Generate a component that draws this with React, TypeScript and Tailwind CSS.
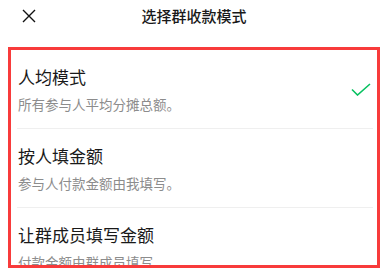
import { useState } from "react";

type Mode = {
  id: string;
  title: string;
  desc: string;
};

const modes: Mode[] = [
  { id: "avg", title: "人均模式", desc: "所有参与人平均分摊总额。" },
  { id: "self", title: "按人填金额", desc: "参与人付款金额由我填写。" },
  { id: "member", title: "让群成员填写金额", desc: "付款金额由群成员填写。" },
];

const CloseIcon = () => (
  <svg width="14" height="14" viewBox="0 0 14 14" fill="none">
    <path d="M1 1L13 13M13 1L1 13" stroke="#111" strokeWidth="1.4" />
  </svg>
);

const CheckIcon = () => (
  <svg width="20" height="13" viewBox="0 0 20 13" fill="none">
    <path d="M1 6.5L6.5 12L19 1" stroke="#07c160" strokeWidth="1.6" />
  </svg>
);

const App = () => {
  const [selected, setSelected] = useState("avg");

  return (
    <div
      className="h-[270px] w-[388px] overflow-hidden bg-white"
      style={{ fontFamily: '"Noto Sans CJK SC", "Noto Sans", sans-serif' }}
    >
      <div className="relative flex h-[47px] items-start justify-center pt-[5px]">
        <button className="absolute left-[22px] top-[9px] flex h-[14px] w-[14px] items-center justify-center">
          <CloseIcon />
        </button>
        <span className="text-[15px] leading-[22px] font-medium text-[#191919]">
          选择群收款模式
        </span>
      </div>

      <div className="mx-[8px] h-[221px] overflow-hidden border-[3px] border-[#f83b3b]">
        {modes.map((mode) => (
          <div
            key={mode.id}
            onClick={() => setSelected(mode.id)}
            className="ml-[6px] mr-[4px] flex h-[79px] items-center justify-between border-b border-[#efefef] pr-[2px]"
          >
            <div className="flex flex-col gap-[6px] pl-[1px]">
              <span className="text-[17px] leading-[24px] text-[#191919]">
                {mode.title}
              </span>
              <span className="text-[13.5px] leading-[18px] text-[#8c8c8c]">
                {mode.desc}
              </span>
            </div>
            {selected === mode.id && <CheckIcon />}
          </div>
        ))}
      </div>
    </div>
  );
};

export default App;
